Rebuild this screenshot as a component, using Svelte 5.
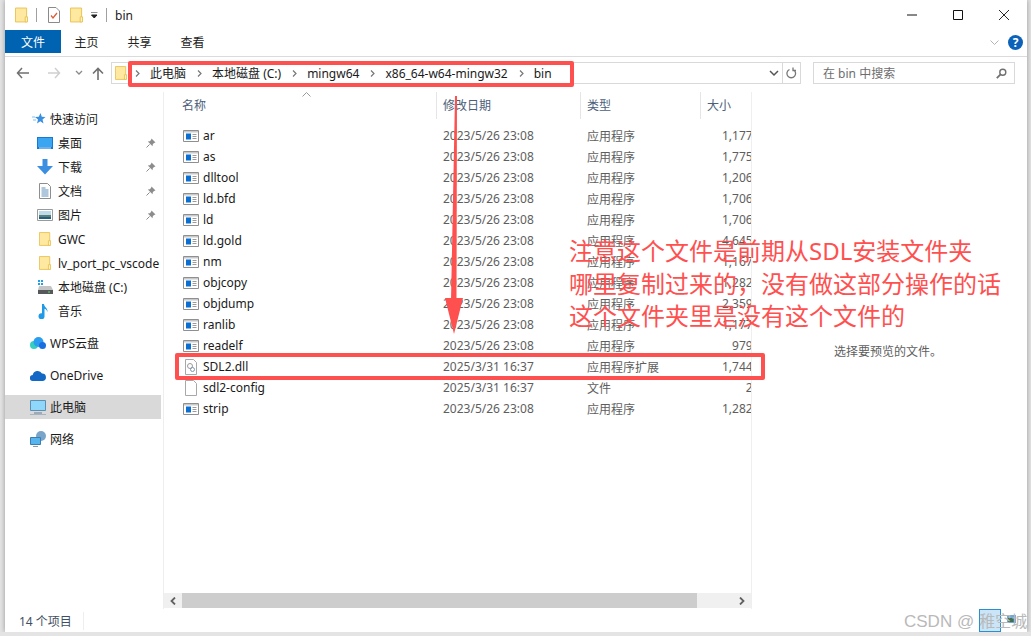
<script lang="ts">
const pinned = [
  { name: "桌面", icon: "desktop" },
  { name: "下载", icon: "download" },
  { name: "文档", icon: "doc" },
  { name: "图片", icon: "pic" },
];

const files = [
  { name: "ar", date: "2023/5/26 23:08", type: "应用程序", size: "1,177", icon: "exe" },
  { name: "as", date: "2023/5/26 23:08", type: "应用程序", size: "1,775", icon: "exe" },
  { name: "dlltool", date: "2023/5/26 23:08", type: "应用程序", size: "1,206", icon: "exe" },
  { name: "ld.bfd", date: "2023/5/26 23:08", type: "应用程序", size: "1,706", icon: "exe" },
  { name: "ld", date: "2023/5/26 23:08", type: "应用程序", size: "1,706", icon: "exe" },
  { name: "ld.gold", date: "2023/5/26 23:08", type: "应用程序", size: "4,645", icon: "exe" },
  { name: "nm", date: "2023/5/26 23:08", type: "应用程序", size: "1,167", icon: "exe" },
  { name: "objcopy", date: "2023/5/26 23:08", type: "应用程序", size: "1,282", icon: "exe" },
  { name: "objdump", date: "2023/5/26 23:08", type: "应用程序", size: "2,359", icon: "exe" },
  { name: "ranlib", date: "2023/5/26 23:08", type: "应用程序", size: "1,177", icon: "exe" },
  { name: "readelf", date: "2023/5/26 23:08", type: "应用程序", size: "979", icon: "exe" },
  { name: "SDL2.dll", date: "2025/3/31 16:37", type: "应用程序扩展", size: "1,744", icon: "dll" },
  { name: "sdl2-config", date: "2025/3/31 16:37", type: "文件", size: "2", icon: "file" },
  { name: "strip", date: "2023/5/26 23:08", type: "应用程序", size: "1,282", icon: "exe" },
];

const crumbs = ["此电脑", "本地磁盘 (C:)", "mingw64", "x86_64-w64-mingw32", "bin"];
</script>

{#snippet folder(w, h)}
  <svg width={w} height={h} viewBox="0 0 14 16">
    <path d="M.5.5h12v15H.5z" fill="#ffe9a0" stroke="#e8c04f"/>
    <path d="M11 10h2.500v5.500H11z" fill="#fff3c4" stroke="#e8c04f"/>
  </svg>
{/snippet}

{#snippet pin()}
  <svg class="pin" width="10" height="10" viewBox="0 0 10 10">
    <path d="M5.500 0.500 9.500 4.500 8 5 6.800 6.200 6.500 8.200 1.800 3.500 3.800 3.200 5 2Z" fill="#8c8c8c"/>
    <path d="M3.600 6.400 0.500 9.500" stroke="#8c8c8c" fill="none"/>
  </svg>
{/snippet}

<div class="window">
  <header class="titlebar">
    {@render folder(13, 16)}
    <span class="vsep"></span>
    <svg width="12" height="16" viewBox="0 0 12 16">
      <path d="M.5.5h7.500l3.500 3.500v11.500H.5z" fill="#fff" stroke="#8a8a8a"/>
      <path d="M3 8.500l2 2.500 4-5" fill="none" stroke="#d9603a" stroke-width="1.300"/>
    </svg>
    <span class="qa-folder">{@render folder(13, 16)}</span>
    <svg class="qa-drop" width="7" height="7" viewBox="0 0 7 7">
      <path d="M0 0h6.500M0.500 3h5.500L3.250 6z" stroke="#222" stroke-width="1" fill="#222"/>
    </svg>
    <span class="vsep last"></span>
    <span class="title">bin</span>
    <div class="win-buttons">
      <svg width="12" height="12" viewBox="0 0 12 12"><path d="M1 6h10" stroke="#111"/></svg>
      <svg width="12" height="12" viewBox="0 0 12 12"><path d="M1.500 1.500h9v9h-9z" fill="none" stroke="#111"/></svg>
      <svg width="12" height="12" viewBox="0 0 12 12"><path d="M1 1l10 10M11 1L1 11" stroke="#111" stroke-width="0.900"/></svg>
    </div>
  </header>

  <nav class="ribbon">
    <button class="tab file">文件</button>
    <button class="tab">主页</button>
    <button class="tab">共享</button>
    <button class="tab">查看</button>
    <span class="ribbon-end">
      <svg width="9" height="6" viewBox="0 0 9 6"><path d="M.5.5l4 4 4-4" fill="none" stroke="#b4b4b4"/></svg>
      <span class="help">?</span>
    </span>
  </nav>

  <div class="addressbar">
    <svg class="nav-btn" width="14" height="12" viewBox="0 0 14 12"><path d="M6 1L1.500 6 6 11M1.500 6H13" fill="none" stroke="#707070" stroke-width="1.500"/></svg>
    <svg class="nav-btn off" width="14" height="12" viewBox="0 0 14 12"><path d="M8 1l4.500 5L8 11M12.500 6H1" fill="none" stroke="#cfcfcf" stroke-width="1.500"/></svg>
    <svg class="nav-btn small" width="8" height="6" viewBox="0 0 8 6"><path d="M1 1l3 3 3-3" fill="none" stroke="#8a8a8a" stroke-width="1.300"/></svg>
    <svg class="nav-btn up" width="12" height="13" viewBox="0 0 12 13"><path d="M1 6.500L6 1.500l5 5M6 1.500V13" fill="none" stroke="#707070" stroke-width="1.600"/></svg>
    <div class="path">
      <span class="path-folder">{@render folder(12, 16)}</span>
      {#each crumbs as c}
        <svg class="chev" width="5" height="7" viewBox="0 0 5 7"><path d="M1 .5l3 3-3 3" fill="none" stroke="#777" stroke-width="1.200"/></svg>
        <span class="crumb">{c}</span>
      {/each}
      <span class="path-end">
        <svg width="10" height="7" viewBox="0 0 10 7"><path d="M1 1l4 4 4-4" fill="none" stroke="#555" stroke-width="1.500"/></svg>
        <span class="refresh">
          <svg width="11" height="12" viewBox="0 0 11 12"><path d="M3.500 2.500A4.300 4.300 0 1 0 7 2.500M7 .5v3h3" fill="none" stroke="#777" stroke-width="1.300"/></svg>
        </span>
      </span>
    </div>
    <div class="search">
      <span>在 bin 中搜索</span>
      <svg width="11" height="11" viewBox="0 0 11 11"><circle cx="6.800" cy="4.200" r="3" fill="none" stroke="#707070" stroke-width="1.400"/><path d="M4.600 6.400L.8 10.200" stroke="#707070" stroke-width="1.800"/></svg>
    </div>
  </div>

  <div class="main">
    <aside class="sidebar">
      <div class="side-row top quick">
        <svg width="14" height="14" viewBox="0 0 14 14"><path d="M8.500 1l1.300 3.800 3.700.2-3 2.500 1 3.900-3.200-2.200L5 11.500l1-3.900L3 5l3.800-.2z" fill="#3a8fe0"/><path d="M0 5h3M1 8h3" stroke="#7cc0f0"/></svg>
        <span>快速访问</span>
      </div>
      {#each pinned as p}
        <div class="side-row sub">
          {#if p.icon === "desktop"}
            <svg width="16" height="12" viewBox="0 0 16 12"><path d="M0 0h16v12H0z" fill="#1579d6"/><path d="M1 1h14v9H1z" fill="#3aa6f2"/><path d="M2 11h12" stroke="#cfe6fa"/></svg>
          {:else if p.icon === "download"}
            <svg width="16" height="16" viewBox="0 0 16 16"><path d="M5.500 0h5v7H16l-8 8.500L0 7h5.500z" fill="#3c8fe0"/></svg>
          {:else if p.icon === "doc"}
            <svg width="12" height="16" viewBox="0 0 12 16"><path d="M.5.5h8l3 3v12H.5z" fill="#fff" stroke="#8e8e8e"/><path d="M2.500 5h4M2.500 7h7M2.500 9h7M2.500 11h7M2.500 13h7" stroke="#5e8fb8"/></svg>
          {:else}
            <svg width="16" height="12" viewBox="0 0 16 12"><path d="M.5.5h15v11H.5z" fill="#fff" stroke="#9a9a9a"/><path d="M2 2h12v4H2z" fill="#bcdcec"/><path d="M2 6h12v2H2z" fill="#5f7f72"/><path d="M2 8h12v2H2z" fill="#1f5f86"/></svg>
          {/if}
          <span>{p.name}</span>
          {@render pin()}
        </div>
      {/each}
      <div class="side-row sub">
        <span class="side-folder">{@render folder(12, 16)}</span>
        <span>GWC</span>
      </div>
      <div class="side-row sub">
        <span class="side-folder">{@render folder(12, 16)}</span>
        <span>lv_port_pc_vscode</span>
      </div>
      <div class="side-row sub">
        <svg width="16" height="14" viewBox="0 0 16 14">
          <path d="M1 0h2v2H1zM4 0h2v2H4zM1 3h2v2H1zM4 3h2v2H4z" fill="#1fa0e8"/>
          <path d="M2 6h12l2 4v4H1V10z" fill="#c4c4c4"/><path d="M1 10h15v4H1z" fill="#55595c"/><path d="M11 11.500h2v1h-2z" fill="#5fe05f"/>
        </svg>
        <span>本地磁盘 (C:)</span>
      </div>
      <div class="side-row sub">
        <svg width="16" height="16" viewBox="0 0 16 16"><path d="M5 1h2c0 3 4 4 3.500 8-.5-2-2-3-3-3.300V13a3 3 0 1 1-2.500-2.700z" fill="#1f9ae8"/></svg>
        <span>音乐</span>
      </div>
      <div class="side-row top gap">
        <svg width="16" height="12" viewBox="0 0 16 12"><circle cx="4" cy="8" r="4" fill="#35cfc0"/><circle cx="8.500" cy="5" r="5" fill="#2a9df0"/><circle cx="12.500" cy="8.500" r="3.500" fill="#1a6fe0"/></svg>
        <span>WPS云盘</span>
      </div>
      <div class="side-row top gap">
        <svg width="16" height="11" viewBox="0 0 16 11"><path d="M3 11a3 3 0 0 1-.3-6A5 5 0 0 1 12 3.500 3.800 3.800 0 0 1 13 11z" fill="#1268c4"/></svg>
        <span>OneDrive</span>
      </div>
      <div class="side-row top gap selected">
        <svg width="16" height="15" viewBox="0 0 16 15"><path d="M.5.500h15v10H.5z" fill="#8fd6fb" stroke="#5e8fb0"/><path d="M4 13h8" stroke="#8a9aa8" stroke-width="1.500"/><path d="M0 14.500h16" stroke="#a8b4bf"/></svg>
        <span>此电脑</span>
      </div>
      <div class="side-row top gap">
        <svg width="16" height="16" viewBox="0 0 16 16"><circle cx="11" cy="5" r="5" fill="#7ba5c8"/><path d="M0.500 6.500h10v7h-10z" fill="#56b4ee" stroke="#3a7fb0"/><path d="M3 15.500h5" stroke="#8a9aa8"/></svg>
        <span>网络</span>
      </div>
    </aside>

    <section class="content">
      <div class="list">
        <div class="columns">
          <div class="col c-name">名称</div>
          <div class="col c-date">修改日期</div>
          <div class="col c-type">类型</div>
          <div class="col c-size">大小</div>
          <svg class="sort" width="9" height="5" viewBox="0 0 9 5"><path d="M.5 4.500l4-4 4 4" fill="none" stroke="#9a9a9a"/></svg>
        </div>
        <div class="rows">
          {#each files as f}
            <div class="row">
              <div class="cell c-name">
                {#if f.icon === "exe"}
                  <svg width="16" height="12" viewBox="0 0 16 12"><path d="M.5.500h15v11H.5z" fill="#fff" stroke="#8f8f8f"/><path d="M1 1h14v1.500H1z" fill="#c9c9c9"/><path d="M3 3.500h5v6H3z" fill="#0a6fd0"/><path d="M9.500 4.500h4M9.500 6.500h4M9.500 8.500h4" stroke="#9a9a9a"/></svg>
                {:else if f.icon === "dll"}
                  <svg width="12" height="16" viewBox="0 0 12 16"><path d="M.5.500h8l3 3v12H.5z" fill="#fff" stroke="#a8a8a8"/><circle cx="5" cy="7" r="2.500" fill="none" stroke="#9a9a9a"/><circle cx="7.500" cy="10.500" r="2" fill="none" stroke="#7f96b0"/></svg>
                {:else}
                  <svg width="12" height="16" viewBox="0 0 12 16"><path d="M.5.500h8l3 3v12H.5z" fill="#fff" stroke="#a8a8a8"/></svg>
                {/if}
                <span class="fname">{f.name}</span>
              </div>
              <div class="cell c-date dim">{f.date}</div>
              <div class="cell c-type dim">{f.type}</div>
              <div class="cell c-size dim"><span class="size-text">{f.size} KB</span></div>
            </div>
          {/each}
        </div>
        <div class="hscroll">
          <svg class="arrow" width="6" height="8" viewBox="0 0 6 8"><path d="M5 .5L1.500 4 5 7.500" fill="none" stroke="#606060" stroke-width="1.800"/></svg>
          <div class="thumb"></div>
          <div class="rest"></div>
          <svg class="arrow" width="6" height="8" viewBox="0 0 6 8"><path d="M1 .5L4.500 4 1 7.500" fill="none" stroke="#606060" stroke-width="1.800"/></svg>
        </div>
      </div>
      <div class="preview">选择要预览的文件。</div>
    </section>
  </div>

  <footer class="status"><span>14 个项目</span></footer>
</div>

<!-- annotations drawn over the screenshot -->
<div class="mark path-mark"></div>
<div class="mark file-mark"></div>
<svg class="arrow-mark" width="22" height="238" viewBox="0 0 22 238">
  <path d="M12 0h2l-.5 205H8z" fill="#ff5050"/>
  <path d="M2 202h18l-9 36z" fill="#ff5050"/>
</svg>
<div class="note">
  注意这个文件是前期从SDL安装文件夹<br/>哪里复制过来的，没有做这部分操作的话<br/>这个文件夹里是没有这个文件的
</div>
<div class="selbox"></div>
<svg class="thumb-icon" width="9" height="8" viewBox="0 0 9 8"><path d="M0 0h9v8H0z" fill="#6fa8dc"/><path d="M1 3h6v4H1z" fill="#3f6f4f"/></svg>
<div class="csdn">CSDN @<span>稚空城</span></div>

<style>
:global(body) {
  margin: 0;
  background: #e4e4e4;
}

.window {
  width: 1022px;
  height: 632px;
  margin-left: 5px;
  background: #fff;
  box-shadow: 0 0 5px rgba(0, 0, 0, 0.35);
  display: flex;
  flex-direction: column;
  overflow: hidden;
  font: 12px "Noto Sans", "Noto Sans CJK SC", sans-serif;
  color: #1a1a1a;
}

.titlebar {
  height: 30px;
  flex: none;
  display: flex;
  align-items: center;
  padding-left: 10px;
  box-sizing: border-box;
}

.vsep {
  width: 1px;
  height: 14px;
  background: #a0a0a0;
  margin: 0 11px 0 8px;
}

.vsep.last {
  margin: 0 8px 0 8px;
}

.qa-folder {
  display: flex;
  margin-left: 10px;
}

.qa-drop {
  margin-left: 8px;
}

.title {
  font-size: 12px;
  color: #222;
}

.win-buttons {
  margin-left: auto;
  display: flex;
  gap: 34px;
  padding-right: 17px;
}

.ribbon {
  height: 26px;
  flex: none;
  display: flex;
  align-items: stretch;
  border-bottom: 1px solid #dadbdc;
}

.tab {
  width: 53px;
  height: 23px;
  border: 0;
  padding: 0;
  background: none;
  font: inherit;
  color: #222;
}

.tab.file {
  width: 56px;
  background: #0063b1;
  color: #fff;
  margin-right: -1px;
}

.ribbon-end {
  margin-left: auto;
  display: flex;
  align-items: center;
  gap: 9px;
  padding: 0 4px 1px 0;
  height: 25px;
}

.help {
  width: 15px;
  height: 15px;
  border-radius: 50%;
  background: #0c62b8;
  color: #fff;
  font-size: 12px;
  font-weight: 700;
  line-height: 15px;
  text-align: center;
}

.addressbar {
  height: 22px;
  flex: none;
  margin-top: 5px;
  display: flex;
  align-items: center;
}

.nav-btn {
  margin-left: 11px;
}

.nav-btn.off {
  margin-left: 17px;
}

.nav-btn.small {
  margin-left: 14px;
}

.nav-btn.up {
  margin-left: 9px;
}

.path {
  margin-left: 7px;
  width: 690px;
  height: 22px;
  box-sizing: border-box;
  border: 1px solid #d9d9d9;
  display: flex;
  align-items: center;
  padding-left: 3px;
}

.path-folder {
  display: flex;
  margin-right: 8px;
}

.chev {
  margin-right: 10px;
}

.crumb {
  margin-right: 11px;
  color: #1a1a1a;
  white-space: nowrap;
}

.path-end {
  margin-left: auto;
  display: flex;
  align-items: center;
  height: 100%;
  gap: 3px;
}

.refresh {
  width: 17px;
  height: 20px;
  border-left: 1px solid #d9d9d9;
  display: flex;
  align-items: center;
  justify-content: center;
}

.search {
  width: 202px;
  height: 22px;
  margin-left: 12px;
  box-sizing: border-box;
  border: 1px solid #d9d9d9;
  display: flex;
  align-items: center;
  justify-content: space-between;
  padding: 0 7px 0 9px;
  color: #6d6d6d;
}

.main {
  flex: 1;
  min-height: 0;
  margin-top: 8px;
  display: flex;
}

.sidebar {
  width: 156px;
  flex: none;
  padding: 15px 2px 0 0;
  border-right: 1px solid #eeeeee;
  white-space: nowrap;
  overflow: hidden;
}

.side-row {
  height: 24px;
  display: flex;
  align-items: center;
  color: #1a1a1a;
}

.side-row.top {
  padding-left: 25px;
}

.side-row.top > svg {
  width: 16px;
  margin-right: 4px;
}

.side-row.quick {
  padding-left: 26px;
}

.side-row.quick > svg {
  margin-right: 3px;
}

.side-row.sub {
  padding-left: 32px;
}

.side-row.sub > svg,
.side-folder {
  margin-right: 5px;
  flex: none;
}

.side-row.sub > svg:first-child {
  width: 16px;
}

.side-folder {
  width: 16px;
  display: flex;
  justify-content: center;
}

.pin {
  margin-left: auto;
  margin-right: 4px;
}

.side-row.gap {
  margin-top: 8px;
}

.side-row.selected {
  background: #d9d9d9;
}

.content {
  flex: 1;
  min-width: 0;
  display: flex;
}

.list {
  width: 587px;
  flex: none;
  border-right: 1px solid #efefef;
  display: flex;
  flex-direction: column;
  overflow: hidden;
}

.columns {
  position: relative;
  display: flex;
  height: 27px;
  flex: none;
  color: #4c607a;
}

.sort {
  position: absolute;
  left: 138px;
  top: 0;
}

.col {
  box-sizing: border-box;
  padding-left: 6px;
  line-height: 27px;
  border-right: 1px solid #e5e5e5;
}

.col.c-size {
  border-right: 0;
}

.c-name {
  width: 273px;
  flex: none;
  padding-left: 19px;
  box-sizing: border-box;
}

.col.c-name {
  padding-left: 18px;
}

.c-date {
  width: 144px;
  flex: none;
  box-sizing: border-box;
}

.c-type {
  width: 120px;
  flex: none;
  box-sizing: border-box;
}

.c-size {
  width: 50px;
  flex: none;
  box-sizing: border-box;
}

.rows {
  flex: 1;
  padding-top: 6px;
}

.row {
  display: flex;
  height: 21px;
  align-items: center;
}

.cell {
  white-space: nowrap;
}

.cell.c-name {
  display: flex;
  align-items: center;
}

.cell.c-name > svg {
  width: 16px;
  flex: none;
}

.fname {
  margin-left: 4px;
  color: #1a1a1a;
}

.cell.c-date,
.cell.c-type {
  padding-left: 6px;
}

.cell.c-size {
  overflow: hidden;
}

.size-text {
  display: block;
  width: 70px;
  text-align: right;
}

.dim {
  color: #5e5e5e;
}

.hscroll {
  height: 15px;
  flex: none;
  margin-bottom: 1px;
  display: flex;
  align-items: center;
  background: #f0f0f0;
}

.arrow {
  flex: none;
  margin: 0 6px;
}

.thumb {
  width: 515px;
  height: 100%;
  background: #cdcdcd;
}

.rest {
  flex: 1;
}

.preview {
  flex: 1;
  text-align: center;
  padding: 251px 3px 0 0;
  color: #5e5e5e;
  line-height: 17px;
}

.status {
  height: 23px;
  flex: none;
  display: flex;
  align-items: center;
  padding-left: 14px;
  color: #3f4f63;
}

.status span {
  padding-right: 11px;
  border-right: 1px solid #eee;
}

.mark {
  position: absolute;
  box-sizing: border-box;
  border: 4px solid #ff5050;
  border-radius: 2px;
}

.path-mark {
  left: 128px;
  top: 61px;
  width: 446px;
  height: 26px;
}

.file-mark {
  left: 175px;
  top: 353px;
  width: 590px;
  height: 27px;
}

.arrow-mark {
  position: absolute;
  left: 443px;
  top: 96px;
}

.note {
  position: absolute;
  left: 569px;
  top: 235px;
  font: 24px/32.500px "Noto Sans", "Noto Sans CJK SC", sans-serif;
  color: #ff5050;
  white-space: nowrap;
}

.csdn {
  position: absolute;
  left: 904px;
  top: 608px;
  font: 17px "Liberation Sans", "Noto Sans CJK SC", sans-serif;
  color: #b9b9b9;
  white-space: nowrap;
}

.csdn span {
  margin-left: 5px;
  font-size: 16px;
}

.selbox {
  position: absolute;
  left: 979px;
  top: 609px;
  width: 22px;
  height: 23px;
  box-sizing: border-box;
  border: 1px solid #2a8fd0;
  background: rgba(120, 190, 235, 0.4);
}

.thumb-icon {
  position: absolute;
  left: 1007px;
  top: 615px;
}
</style>
